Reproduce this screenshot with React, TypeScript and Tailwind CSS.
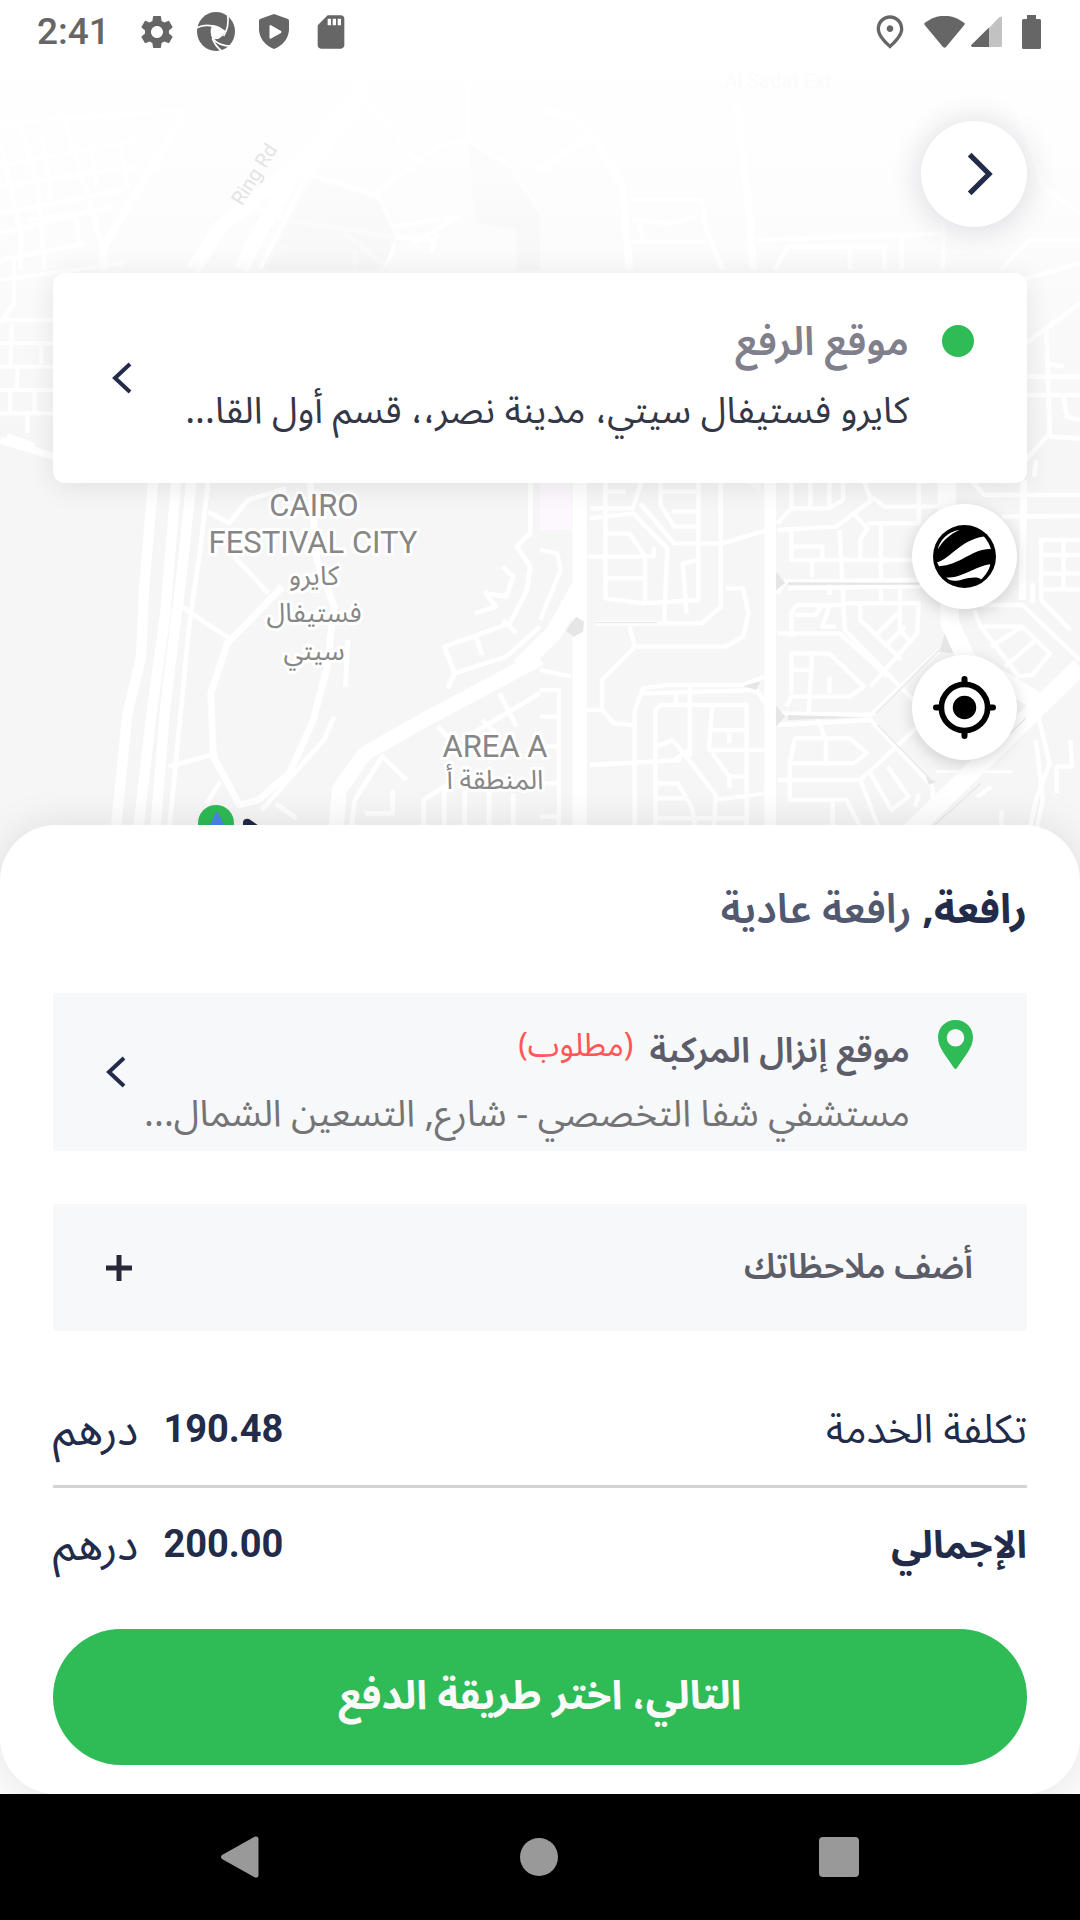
import React from "react";
import { MdOutlinePlace, MdSdCard, MdSettings } from "react-icons/md";

/* ---------- Status bar ---------- */

function ApertureIcon() {
  return (
    <svg viewBox="567 36 113 117" preserveAspectRatio="none" className="ml-5 h-[39px] w-[38px]" aria-hidden="true">
      <ellipse cx="623.5" cy="94.5" rx="56.500" ry="58.500" fill="#666" />
      <path d="M612 75 Q634 76 650 94 Q647 108 630 117 L614 118 Q602 98 612 75Z" fill="#fff" />
      <g fill="none" stroke="#fff" strokeWidth="5">
        <path d="M564 84 Q608 64 652 96" />
        <path d="M658 44 Q664 80 646 108" />
        <path d="M644 156 Q622 140 613 116" />
        <path d="M680 138 Q634 142 612 114" />
      </g>
    </svg>
  );
}

function StatusBar() {
  return (
    <header dir="ltr" className="relative flex h-[63px] items-center justify-between pl-[37px] pr-[39px] text-[#666]">
      <div className="flex items-center">
        <time className="w-[100px] font-['Roboto'] text-[37px] font-medium leading-none">2:41</time>
        <MdSettings className="size-10" aria-hidden="true" />
        <ApertureIcon />
        <svg viewBox="0 0 30 35" className="ml-6 h-[35px] w-[30px]" fill="#666" aria-hidden="true">
          <path d="M15 0 L29 5 Q30 5.500 30 7 V16 Q29 29 15 35 Q1 29 0 16 V7 Q0 5.500 1 5Z" />
          <path d="M10.500 12 Q10.500 10.500 12 11.200 L22 17 Q23 18 22 19 L12 24.500 Q10.500 25 10.500 24Z" fill="#fff" />
        </svg>
        <MdSdCard className="ml-[22px] size-10" aria-hidden="true" />
      </div>
      <div className="flex items-center">
        <MdOutlinePlace className="size-10" aria-hidden="true" />
        <svg viewBox="0 0 41 32" className="ml-[14px] h-8 w-[41px]" fill="#666" aria-hidden="true">
          <path d="M0.500 7 Q20.500 -7.500 40.500 7 Q41 8 40.300 9 L22 31 Q20.500 32.500 19 31 L0.700 9 Q0 8 0.500 7Z" />
        </svg>
        <svg viewBox="0 0 31 31" className="ml-1.5 size-[31px]" aria-hidden="true">
          <path d="M18 12 L28.500 1 Q31 -0.500 31 2 V29.500 Q31 31 29.500 31 H18Z" fill="#c2c2c2" />
          <path d="M18 11.500 V31 H1.500 Q-0.800 30.500 0.500 28.800Z" fill="#666" />
        </svg>
        <svg viewBox="0 0 19 34" className="ml-5 h-[34px] w-[19px]" fill="#666" aria-hidden="true">
          <path d="M5 0 H14 V4 H17.500 Q19 4 19 5.500 V32.500 Q19 34 17.500 34 H1.500 Q0 34 0 32.500 V5.500 Q0 4 1.500 4 H5Z" />
        </svg>
      </div>
    </header>
  );
}

/* ---------- Map ---------- */

function StreetMap() {
  return (
    <svg
      viewBox="0 0 1080 900"
      preserveAspectRatio="xMidYMin slice"
      className="absolute inset-x-0 top-0 h-[900px] w-full"
      role="img"
      aria-label="خريطة"
    >
      <defs>
        <linearGradient id="fade" x1="0" y1="0" x2="0" y2="1">
          <stop offset="0" stopColor="#fff" />
          <stop offset="0.18" stopColor="#fff" stopOpacity="0.95" />
          <stop offset="0.42" stopColor="#fff" stopOpacity="0.82" />
          <stop offset="0.7" stopColor="#fff" stopOpacity="0.45" />
          <stop offset="1" stopColor="#fff" stopOpacity="0" />
        </linearGradient>
      </defs>
      <rect width="1080" height="900" fill="#f6f6f6" />

      {/* north west blocks and ring road */}
      <g transform="scale(0.3444 0.3333)" fill="none" stroke="#fff" strokeWidth="14" strokeLinejoin="round">
        <path d="M0 370 L540 330 M60 380 L110 560 L130 810 M0 420 L60 700 L60 810 M180 340 L260 600 L310 800 M0 500 L400 420 M0 560 L390 500 M0 640 L360 570 M0 700 L320 620 M80 660 L220 640 L230 740 M0 780 L250 730 M120 400 L150 600 M260 420 L280 560 M350 430 L370 560" />
        <path d="M530 350 L300 740 L300 810" strokeWidth="24" />
        <path d="M1060 260 L860 500 L640 680 L560 810 M1000 330 L880 480 L740 720 L700 810" strokeWidth="44" />
        <path d="M1040 320 L900 520 L760 810" strokeWidth="24" />
        <path d="M740 620 L830 660 L1140 710 L1270 720 M890 520 L1100 590 L1140 690 L1140 760 L1100 810 M1060 300 L1210 480 M1090 580 L1270 440 L1360 420 L1480 500 L1568 640 M1360 250 L1360 420 M1140 680 L1330 650 L1200 730 M1000 700 L1110 790 M1270 700 L1250 760 M790 730 L830 748 M1030 750 V810" />
        <path d="M1150 710 L1100 600 L900 530 L760 810 H1110Z M1360 430 L1480 500 L1568 640 V810 H1500 V690 L1380 670Z" fill="#d9d9d9" fillOpacity="0.35" stroke="none" />
      </g>
      <g transform="translate(540 0) scale(0.3444 0.3333)" fill="none" stroke="#fff" strokeWidth="14" strokeLinejoin="round">
        <path d="M0 330 L100 350 L170 430 L240 560 L260 810 M0 510 L140 410 M570 300 L600 560 L620 810" strokeWidth="22" />
        <path d="M260 600 H470 L480 680 L530 810 M270 660 L380 670 L450 650 M270 725 H480 M290 670 L300 725 M630 720 L1180 700 M680 810 L720 740 H1000 V810 M900 740 V810 M1050 700 V810 M1170 670 V810 M1340 810 L1420 720 H1568 M1460 560 L1568 640 M1380 300 L1460 560" />
      </g>

      {/* strips beside the pick-up card */}
      <g transform="translate(0 260) scale(0.3444 0.3333)" fill="none" stroke="#fff" strokeWidth="12">
        <path d="M0 60 L360 10 M40 0 L40 130 L0 190 M0 180 H160 M0 250 H160 M35 190 L30 320 M120 250 V310 M0 320 H160 M50 320 V390 M0 390 H160 M30 390 V460 M100 390 V460 M0 460 H160 M80 460 V520" />
        <path d="M0 540 L160 590 M20 530 L100 560" strokeWidth="22" />
      </g>
      <g transform="translate(540 260) scale(0.3444 0.3333)" fill="none" stroke="#fff" strokeWidth="14">
        <path d="M1400 60 L1568 10 M1410 250 L1568 130 M1410 350 H1568 M1410 405 H1568 M1470 200 L1480 520 L1410 600 M1480 530 L1568 535 M1520 410 L1530 470 L1568 480 M1440 600 L1435 650 M1470 310 L1520 320" />
      </g>

      {/* festival city and the diagonal highway */}
      <g transform="translate(0 480) scale(0.3444 0.3333)" fill="none" stroke="#fff" strokeWidth="14" strokeLinejoin="round">
        <path d="M445 0 L418 330 L410 530 L370 700 L335 1060 M512 0 L480 400 L440 700 L400 1060 M556 0 L530 260 L480 680 L450 1060" strokeWidth="30" />
        <path d="M605 0 L580 220 L550 430 L515 800 L490 1060" />
        <path d="M605 95 L665 130 L720 60 L830 25 M680 230 L780 340 M520 375 L665 475 M490 860 L630 820 M600 970 L640 905 M1010 480 L1003 620 M970 710 L940 780 L760 990 M800 970 L860 1015" />
        <path d="M900 0 L920 240 L970 380 L950 560 L910 720 L840 880 L750 960 L695 975 L620 830 L612 640 L660 490 L820 320" strokeWidth="20" />
        <path d="M975 1060 L985 930 L1060 820 L1250 710 L1568 535" strokeWidth="44" />
        <path d="M1540 0 L1540 160 L1500 200 L1540 260 L1530 330 L1480 430 L1290 500 L1320 580 L1300 625 M1320 580 L1470 530 L1568 440 M1460 260 L1490 290 L1470 350 L1410 340 L1440 380 L1380 400 M1380 465 L1400 525 M1460 420 L1500 460 M1020 1050 L1030 960 L1110 830 L1180 900 M1060 1000 H1140 V930 M1230 1060 V960 L1290 920 V1060 M1350 930 V1060 M1420 930 V1060 M1490 940 V1060 M1270 740 L1320 790 M1450 640 L1500 740 M1340 780 L1568 640 M1400 720 L1440 760" />
      </g>

      {/* residential grid */}
      <g transform="translate(540 480) scale(0.3444 0.3333)">
        <path d="M0 0 H90 V150 H0Z M590 0 H640 V40Z" fill="#fdf8fd" />
        <g fill="none" stroke="#fff" strokeWidth="13" strokeLinejoin="round">
          <path d="M115 0 V1060" strokeWidth="42" />
          <path d="M115 320 L40 460 L-60 560" strokeWidth="50" />
          <path d="M668 0 V1060" strokeWidth="34" />
          <path d="M1180 0 L1190 430 L1240 540 L1440 660 M1568 560 L1070 1060" strokeWidth="54" />
          <path d="M1405 0 L1400 360" strokeWidth="20" />
          <path d="M0 210 L50 220 L60 270 L0 420 M0 570 L90 590 M0 630 H55 V1060 M0 710 H55 M0 800 H55 M0 910 H55 M0 1010 H55" />
          <path d="M145 85 H270 L295 0 M190 35 H250 M190 0 V355 L300 370 L460 360 V0 M145 115 L270 100 L370 205 L360 430 M290 70 L390 190 H530 L660 150 M195 160 H260 L305 230 V370 M140 230 H330 V200 M195 295 H305 M350 0 V75 L390 140 H460 M355 35 H460 M385 95 H460 M525 0 V380 L470 430 H160 M460 240 L415 250 L425 400" />
          <path d="M540 325 H590 L605 400 L590 470 L540 500 H275 L180 600 V690 L215 730 L280 735 M260 440 L275 500 M135 690 H180 M275 1050 V690 L300 625 L370 615 H590 L650 590 M300 640 L630 630 L660 680 M435 610 V830 M395 635 V675 M335 1060 V690 L350 675 H600 V1060 M335 800 L385 780 L440 850 L510 945 L505 1060 M145 855 L410 840 M435 810 L390 840 M500 680 L490 810 H650 M500 750 H600 M550 760 V790 M500 820 L550 890 H600 M335 910 H400 L440 980 L455 1060 M335 955 H430 M510 960 L650 940 M335 1015 H600 M550 890 V925" />
          <path d="M690 150 L860 140 L970 55 L1000 80 H1160 M730 0 V85 H840 L880 60 V0 M785 0 V80 M840 0 V80 M690 130 L730 85 M940 0 L960 60 M870 150 L885 450 L1150 730 M910 100 L950 145 L930 180 V240 M950 130 H1100 V0 M990 130 V370 M730 150 V240 H1160 M730 200 H820 V240 M790 245 V290 M710 305 L1100 300 M720 325 L1130 318 M690 340 L715 300 M880 370 H1100 L1095 460 L960 620 M745 375 H880 M730 470 V400 L745 375 M740 405 H800 L820 375 M840 300 V345 M690 460 H870 L1010 590 M860 440 L820 440 L840 380 M930 370 V420 L1050 540 M970 470 L1040 400 M1000 500 L1060 440 M1045 300 V450 L1080 490" />
          <path d="M730 640 V520 H840 L940 620 L900 650 H730 L715 680 M790 520 L780 700 M730 570 H785 M840 590 V640 M690 700 L960 705 L1160 510 M690 735 L960 720 L1140 920 M690 780 M725 850 L740 775 H900 L950 820 L910 850 H725 M800 700 L830 780 V850 M690 900 H930 L990 1060 M725 850 V960 H890 L940 1060 M930 900 L1160 680 M850 960 V1060 M960 880 L1020 990 L1070 950 L1010 860 M1140 920 V960 M1090 980 L1100 940" />
          <path d="M1250 0 L1290 45 H1568 M1340 110 L1568 108 M1450 180 H1568 M1455 180 V360 L1540 450 M1455 225 H1568 M1455 280 H1568 M1455 328 H1568 M1520 180 V328 M1280 375 H1400 L1568 540 M1260 390 L1280 440 L1390 590 L1430 585 L1480 520 L1400 440 H1285 M1310 500 L1400 440 M1350 560 L1440 480 M1430 310 V370 M1440 680 L1480 850 L1440 960 L1420 1060 M1440 780 L1460 960 L1440 1060 M1540 780 L1545 860 H1500 V940 M1270 950 L1310 920 M1340 990 V1060" />
          <path d="M1150 875 H1370" strokeWidth="8" />
        </g>
        <path d="M105 410 L128 425 L125 455 L98 470 L75 452Z M685 275 L712 310 L685 330Z M720 307 L1100 308 L1100 314 L720 314Z M590 618 L640 604 L628 630Z M685 675 L712 710 L685 740Z M720 705 L940 712 L720 720Z M1175 460 L1200 520 L1160 515Z M1120 890 L1150 905 L1130 915Z" fill="#e6e6e6" />
        <path d="M975 700 L1160 510 M980 735 L1140 905 M1130 1050 L1280 910 M160 428 H340 M1350 775 L1410 715" stroke="#e9e9e9" strokeWidth="4" />
      </g>

      <rect width="1080" height="440" fill="url(#fade)" />

      {/* pick-up marker */}
      <circle cx="216" cy="823" r="18" fill="#2fbb55" />
      <path d="M217 811 L229 834 H205Z" fill="#4a86e8" />
      <path d="M243 830 V822 Q244 818 249 819 L262 828 V834Z" fill="#222b49" />

      <g
        textAnchor="middle"
        fontFamily="Roboto, 'Noto Sans Arabic', sans-serif"
        fill="#878787"
        stroke="#fff"
        strokeWidth="6"
        strokeLinejoin="round"
        paintOrder="stroke"
      >
        <g fontSize="31">
          <text x="314" y="516">CAIRO</text>
          <text x="313" y="553">FESTIVAL CITY</text>
          <text x="495" y="757">AREA A</text>
        </g>
        <g fontSize="27">
          <text x="314" y="585">كايرو</text>
          <text x="314" y="622">فستيفال</text>
          <text x="314" y="660">سيتي</text>
          <text x="495" y="789">المنطقة أ</text>
        </g>
      </g>
      <g textAnchor="middle" fontFamily="Roboto, sans-serif" fontSize="20">
        <text x="260" y="178" fill="#e4e4e4" transform="rotate(-58 260 178)">Ring Rd</text>
        <text x="778" y="88" fill="#fbfbfb">Al Sadat Ext</text>
      </g>
    </svg>
  );
}

/* ---------- Small icons ---------- */

function Chevron({ flip = false, size }: { flip?: boolean; size: "sm" | "lg" }) {
  return (
    <svg
      viewBox="0 0 20 34"
      className={size === "lg" ? "h-[44px] w-[26px]" : "h-[34px] w-5"}
      fill="none"
      stroke="#222b49"
      strokeWidth="4"
      aria-hidden="true"
    >
      <path d={flip ? "M2 2 L17 17 L2 32" : "M18 3 L3 17 L18 31"} />
    </svg>
  );
}

function GlobeIcon() {
  return (
    <svg viewBox="160 105 188 188" className="size-[63px]" aria-hidden="true">
      <circle cx="254" cy="199" r="94" />
      <g fill="#fff">
        <path d="M174 178 C180 150 205 124 240 119 C212 132 190 150 174 178Z" />
        <path d="M172 216 C215 204 240 150 312 139 C322 150 330 165 333 177 C280 174 240 226 178 228Z" />
        <path d="M200 262 C252 262 280 230 331 222 C328 240 315 257 303 268 C296 258 270 262 250 267 C230 273 210 275 200 262Z" />
      </g>
    </svg>
  );
}

function TargetIcon() {
  return (
    <svg viewBox="0 0 188 188" className="size-[63px]" aria-hidden="true">
      <circle cx="94" cy="94" r="69" fill="none" stroke="#000" strokeWidth="17" />
      <circle cx="94" cy="94" r="35" />
      <path d="M94 9 V24 M94 164 V179 M9 94 H24 M164 94 H179" stroke="#000" strokeWidth="18" strokeLinecap="round" />
    </svg>
  );
}

/* ---------- Sections ---------- */

function PickupCard() {
  return (
    <button
      type="button"
      className="mt-[46px] flex w-full items-center rounded-xl bg-white pb-[37px] pl-[59px] pr-[53px] pt-[37px] text-start shadow-[0_4px_28px_rgba(0,0,0,0.09)]"
    >
      <span className="flex min-w-0 flex-1 gap-[33px]">
        <span className="mt-[15px] size-8 shrink-0 rounded-full bg-[#2fbb55]" />
        <span className="min-w-0 flex-1 whitespace-nowrap">
          <span className="block text-[40px] font-semibold leading-[66px] text-[#7f808b]">موقع الرفع</span>
          <span className="block text-[37px] leading-[70px] text-[#343746]">
            كايرو فستيفال سيتي، مدينة نصر،، قسم أول القا...
          </span>
        </span>
      </span>
      <Chevron size="sm" />
    </button>
  );
}

function DropoffCard() {
  return (
    <button
      type="button"
      className="mt-[55px] flex w-full items-center bg-[#f7f8fa] pb-[5px] pl-[53px] pr-[54px] pt-[27px] text-start"
    >
      <span className="flex min-w-0 flex-1 gap-[28px]">
        <svg viewBox="0 0 35 49" className="h-[49px] w-[35px] shrink-0" aria-hidden="true">
          <path
            fillRule="evenodd"
            fill="#2fbb55"
            d="M17.500 0 C27.500 0 35 7.500 35 17.500 C35 28 26 37 19 48 Q17.500 50 16 48 C9 37 0 28 0 17.500 C0 7.500 7.500 0 17.500 0Z M17.500 9 A8.800 8.800 0 1 0 17.500 26.600 A8.800 8.800 0 1 0 17.500 9Z"
          />
        </svg>
        <span className="min-w-0 flex-1 whitespace-nowrap">
          <span className="flex items-center gap-4">
            <span className="text-[35px] font-semibold leading-[63px] text-[#5c5d69]">موقع إنزال المركبة</span>
            <span className="pb-2.5 text-[32px] leading-[53px] text-[#ff5656]">(مطلوب)</span>
          </span>
          <span className="block text-[37px] leading-[63px] text-[#747476]">
            مستشفي شفا التخصصي - شارع, التسعين الشمال...
          </span>
        </span>
      </span>
      <span className="pb-[22px]">
        <Chevron size="sm" />
      </span>
    </button>
  );
}

function PriceRow({ label, amount, total = false }: { label: string; amount: string; total?: boolean }) {
  return (
    <div
      className={
        total
          ? "flex items-center justify-between pt-7"
          : "mt-[70px] flex items-center justify-between border-b-[3px] border-[#d3d3d3] pb-6"
      }
    >
      <dt className={total ? "text-[38px] font-bold leading-[60px]" : "text-[40px] leading-[60px]"}>{label}</dt>
      <dd className="flex items-center gap-[25px]">
        <span className="pb-1 font-['Roboto'] text-[38px] font-bold leading-[56px]">{amount}</span>
        <span className="text-[44px] leading-[60px]">درهم</span>
      </dd>
    </div>
  );
}

function NavigationBar() {
  return (
    <nav dir="ltr" className="relative flex h-[126px] shrink-0 items-center justify-center gap-[261px] bg-black">
      <button type="button" aria-label="Back">
        <svg viewBox="0 0 38 42" className="h-[42px] w-[38px]" aria-hidden="true">
          <path d="M1 19 L34 0.500 Q37.500 0 37.500 3 V39 Q37.500 42 34 41.500 L1 23 Q-1 21 1 19Z" fill="#999" />
        </svg>
      </button>
      <button type="button" aria-label="Home" className="size-[38px] rounded-full bg-[#999]" />
      <button type="button" aria-label="Recent" className="size-10 rounded bg-[#999]" />
    </nav>
  );
}

export default function App() {
  return (
    <div
      dir="rtl"
      lang="ar"
      className="relative flex min-h-screen flex-col overflow-hidden bg-[#fcfcfc] font-['Noto_Sans_Arabic','Noto_Sans',sans-serif] text-[#222b49]"
    >
      <StreetMap />
      <StatusBar />
      <section className="relative px-[53px] pb-[65px] pt-[58px]">
        <button
          type="button"
          aria-label="رجوع"
          className="flex size-[106px] items-center justify-center rounded-full bg-white pl-3 shadow-[0_2px_32px_rgba(20,20,50,0.16)]"
        >
          <Chevron size="lg" flip />
        </button>
        <PickupCard />
        <div className="mt-[21px] flex flex-col gap-[46px] pr-[10px]">
          <button
            type="button"
            aria-label="نوع الخريطة"
            className="flex size-[105px] items-center justify-center rounded-full bg-white shadow-[0_4px_16px_rgba(0,0,0,0.16)]"
          >
            <GlobeIcon />
          </button>
          <button
            type="button"
            aria-label="موقعي"
            className="flex size-[105px] items-center justify-center rounded-full bg-white shadow-[0_4px_16px_rgba(0,0,0,0.16)]"
          >
            <TargetIcon />
          </button>
        </div>
      </section>

      <main className="relative flex-1 rounded-[56px] bg-white px-[53px] pb-[29px] pt-[57px] shadow-[0_0_40px_rgba(0,0,0,0.1)]">
        <h1 className="text-[41px] font-bold leading-[56px]">
          رافعة, <span className="font-semibold text-[#51586f]">رافعة عادية</span>
        </h1>
        <DropoffCard />
        <button
          type="button"
          className="mt-[53px] flex h-[127px] w-full items-center justify-between bg-[#f7f8fa] pl-[53px] pr-[54px]"
        >
          <span className="text-[34px] font-semibold text-[#5c5d69]">أضف ملاحظاتك</span>
          <svg viewBox="0 0 26 26" className="size-[26px]" aria-hidden="true">
            <path d="M13 0 V26 M0 13 H26" stroke="#262a38" strokeWidth="5" />
          </svg>
        </button>
        <dl>
          <PriceRow label="تكلفة الخدمة" amount="190.48" />
          <PriceRow label="الإجمالي" amount="200.00" total />
        </dl>
        <button
          type="button"
          className="mt-[53px] flex h-[136px] w-full items-center justify-center rounded-full bg-[#2fbb55] text-[40px] font-bold leading-none text-[#fafafa]"
        >
          التالي، اختر طريقة الدفع
        </button>
      </main>
      <NavigationBar />
    </div>
  );
}
